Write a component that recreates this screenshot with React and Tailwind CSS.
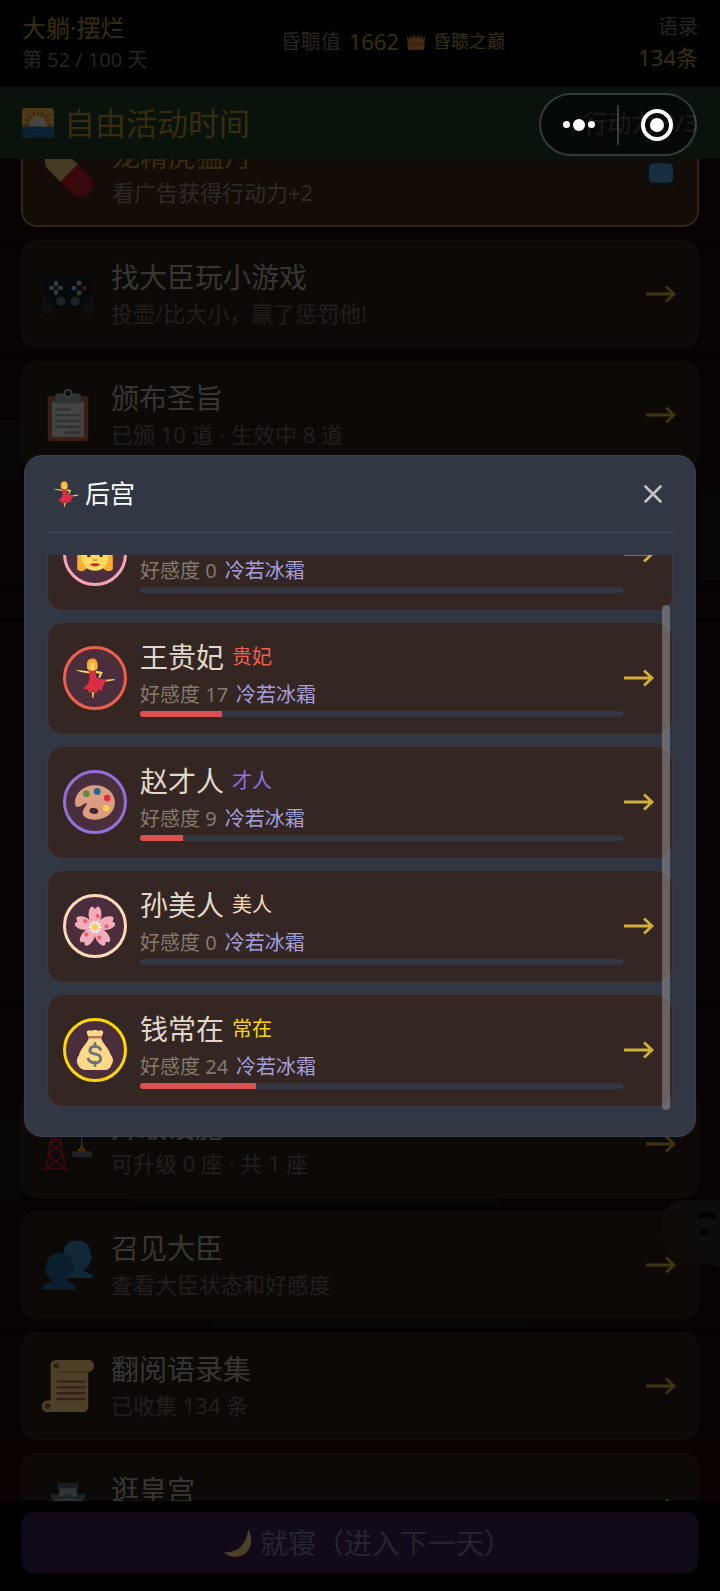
import clsx from "clsx";

const STATUS = { title: "大躺·摆烂", day: "第 52 / 100 天", label: "昏聩值", value: 1662, rank: "昏聩之巅", quotes: "134条" };

const ACTIONS_TOP = [
  { id: "ad", icon: PillIcon, title: "龙精虎猛丹", desc: "看广告获得行动力+2", ad: true },
  { id: "game", icon: GamepadIcon, title: "找大臣玩小游戏", desc: "投壶/比大小，赢了惩罚他!" },
  { id: "edict", icon: ClipboardIcon, title: "颁布圣旨", desc: "已颁 10 道 · 生效中 8 道" },
];

const ACTIONS_BOTTOM = [
  { id: "build", icon: CraneIcon, title: "升级设施", desc: "可升级 0 座 · 共 1 座" },
  { id: "minister", icon: PeopleIcon, title: "召见大臣", desc: "查看大臣状态和好感度" },
  { id: "quotes", icon: ScrollIcon, title: "翻阅语录集", desc: "已收集 134 条" },
  { id: "palace", icon: CastleIcon, title: "逛皇宫", desc: "" },
];

const CONSORTS = [
  { id: 1, icon: WomanIcon, name: "", rank: "", love: 0, ring: "border-[#f8a5b8]", color: "text-[#f8a5b8]" },
  { id: 2, icon: DancerIcon, name: "王贵妃", rank: "贵妃", love: 17, ring: "border-[#f0604c]", color: "text-[#f0604c]" },
  { id: 3, icon: PaletteIcon, name: "赵才人", rank: "才人", love: 9, ring: "border-[#9370db]", color: "text-[#9370db]" },
  { id: 4, icon: BlossomIcon, name: "孙美人", rank: "美人", love: 0, ring: "border-[#ffdab9]", color: "text-[#ffdab9]" },
  { id: 5, icon: MoneyIcon, name: "钱常在", rank: "常在", love: 24, ring: "border-[#ffd700]", color: "text-[#ffd700]" },
];

function DancerIcon({ className }) {
  return (
    <svg viewBox="0 0 36 36" className={className} aria-hidden="true">
      <path d="M0 10.600l13.500 1.600v1.800L5 12.600z" fill="#ffdc5d" />
      <path d="M19 11.500l6 1.200-2.500 5.300-1.500-.5 1.500-3.300-4-.8z" fill="#ffdc5d" />
      <path d="M27 19.500l9-.6-1 1.200-8 1.200z" fill="#ffdc5d" />
      <path d="M15.200 30.500h1.800l-.4 5.500h-.9z" fill="#ffdc5d" />
      <path d="M11 3.500C12 .5 17-.5 18.800 1.700c1.900 1.600 1.200 3.700 1.700 5.500.4 2.300-1.600 4.800-4.500 4.800-3.200 0-5.900-2.200-5.200-4.800.3-1.200-.3-2.200.2-3.700z" fill="#ffac33" />
      <path d="M13.500 4.500c1.300 1 2.500-.5 3.700-.2l.3 7.400h-3z" fill="#ffdc5d" />
      <path d="M12.500 10.800c1.500 1 4.500.8 5.700-.2l.9 7c2.800 1.500 5.500 1.700 9.800 1.600-.4 1.600-1.300 2.500-2.800 3 .8 1.700.2 2.800-1.200 3.200.3 1.900-.4 3.300-1.200 4.200-.9-.5-1.600-.9-2.300-1.700-.4 1.600-1.400 3-2.700 3.700-1.200-.4-1.900-1.200-2.400-2.200-1.300 1.400-2.700 1.900-4.200 1.700-.3-1-.2-2 .1-3-1.600.3-3.400 0-4.800-.9 3.200-2 5-4.500 5.900-8.200z" fill="#dd2e44" />
    </svg>
  );
}

function WomanIcon({ className }) {
  return (
    <svg viewBox="0 0 36 36" className={className} aria-hidden="true">
      <path d="M18 0C8 0 2 6 2 15v17c3 2 6 2 8-1h16c2 3 5 3 8 1V15C34 6 28 0 18 0z" fill="#ffac33" />
      <path d="M6 16c5-1 9-4 11-8 3 4 8 7 13 8v4c0 8-5 13-12 13S6 28 6 20z" fill="#ffdc5d" />
      <rect x="11" y="16" width="3" height="5" rx="1.500" fill="#662113" />
      <rect x="22" y="16" width="3" height="5" rx="1.500" fill="#662113" />
      <path d="M15.500 23h5c0 1.500-5 1.500-5 0z" fill="#c1694f" />
      <path d="M13.500 27c2.500-1 6.500-1 9 0-1.500 3-7.500 3-9 0z" fill="#df1f32" />
    </svg>
  );
}

function PaletteIcon({ className }) {
  return (
    <svg viewBox="0 0 36 36" className={className} aria-hidden="true">
      <path d="M18 3C8 3 0 10 0 18.500c0 2.500.6 4 2.500 4 3 0 5-3.500 8.500-3.500-1.500 3.500-4 5.500-4 9 0 4 5.500 6 11 6 10 0 18-7 18-15.500S28 3 18 3z" fill="#d99e82" />
      <ellipse cx="17" cy="26" rx="4" ry="2.700" fill="#42252b" transform="rotate(12 17 26)" />
      <circle cx="10.200" cy="10.500" r="3" fill="#5c913b" />
      <circle cx="20" cy="8.500" r="3" fill="#226699" />
      <circle cx="29" cy="14.500" r="3" fill="#dd2e44" />
      <circle cx="28" cy="23.500" r="3" fill="#ffcc4d" />
    </svg>
  );
}

function BlossomIcon({ className }) {
  return (
    <svg viewBox="0 0 36 36" className={className} aria-hidden="true">
      {[0, 72, 144, 216, 288].map((r) => (
        <g key={r} transform={`rotate(${r} 18 19)`}>
          <path d="M18 19C13 15 11 8 13 3c.5-1.500 1.500-2.500 2.700-2.500L18 2.500l2.300-2c1.200 0 2.200 1 2.700 2.500C25 8 23 15 18 19z" fill="#f4abba" />
          <circle cx="20.500" cy="9" r="1.800" fill="#ea596e" />
        </g>
      ))}
      {[20, 56, 92, 128, 164, 200, 236, 272, 308, 344].map((r) => (
        <path key={r} d="M17.300 19l-.2-5.500h1.800l-.2 5.500z" fill="#fff" transform={`rotate(${r} 18 19)`} />
      ))}
      <circle cx="18" cy="19" r="3" fill="#ffcc4d" />
    </svg>
  );
}

function MoneyIcon({ className }) {
  return (
    <svg viewBox="0 0 36 36" className={className} aria-hidden="true">
      <path d="M12.500 7h11c1 5 7 9 8.500 15 2.500 3 3 6 1 9-1 3-3 5-6 5H9c-3 0-5-2-6-4-2-3-1.500-7 .500-9C5 16 11.500 12 12.500 7z" fill="#fdd888" />
      <path d="M11 1c1-1.300 3-1 3.800 0 1-1.200 5-1.400 6.200 0 .8-1 3-1.200 4 0 1 1.700-.5 3.500-1 5H12c-.5-1.500-2-3.300-1-5z" fill="#fdd888" />
      <path d="M12 5.500h12v2H12z" fill="#bf6952" />
      <path d="M23 17.500c-1-2-3-2.800-5-2.800-5 0-6.500 5-1.500 6.500l3 .8c5.500 1.500 4.500 7.500-1.500 7.500-3 0-5-1-6-3.300M18 12v3M18 29v3" fill="none" stroke="#67757f" strokeWidth="2.600" strokeLinecap="round" />
    </svg>
  );
}

function PillIcon({ className }) {
  return (
    <svg viewBox="0 0 36 36" className={className} aria-hidden="true">
      <g transform="rotate(45 18 18)">
        <path d="M18 9.500h11.500a8.500 8.500 0 010 17H18z" fill="#be1931" />
        <path d="M18 9.500H6.500a8.500 8.500 0 000 17H18z" fill="#e8c56f" />
      </g>
    </svg>
  );
}

function GamepadIcon({ className }) {
  return (
    <svg viewBox="0 0 36 36" className={className} aria-hidden="true">
      <path d="M3 14C0 21 0 31 1 31.500c5 1 8-3 10-7.500h14c2 4.500 5 8.500 10 7.500 1-.5 1-10.500-2-17.500z" fill="#31373d" />
      <path d="M9 5.500h18c5 0 7.500 4 7.500 9.500S31 25 26 27.500c-2 1-4 0-6 0h-4c-2 0-4 1-6 0C5 25 1.500 20.500 1.500 15S4 5.500 9 5.500z" fill="#16202a" />
      <g fill="#b4c0c8">
        <rect x="8.400" y="9" width="2.600" height="3.600" rx=".6" />
        <rect x="8.400" y="15" width="2.600" height="3.600" rx=".6" />
        <rect x="5" y="12.500" width="3.600" height="2.600" rx=".6" />
        <rect x="10.800" y="12.500" width="3.600" height="2.600" rx=".6" />
      </g>
      <circle cx="13" cy="23" r="3.200" fill="#66757f" />
      <circle cx="23" cy="23" r="3.200" fill="#66757f" />
      <circle cx="25.700" cy="10.500" r="1.700" fill="#ffcc4d" />
      <circle cx="22.200" cy="14" r="1.700" fill="#88c9f9" />
      <circle cx="29.200" cy="14" r="1.700" fill="#dd2e44" />
      <circle cx="25.700" cy="17.300" r="1.700" fill="#a6d388" />
    </svg>
  );
}

function ClipboardIcon({ className }) {
  return (
    <svg viewBox="0 0 36 36" className={className} aria-hidden="true">
      <rect x="4" y="5" width="28" height="31" rx="2" fill="#c1694f" />
      <path d="M7 9h22v24H7z" fill="#e8e8e8" />
      <path d="M9 6c0-2 1-3 3-3h3a3 3 0 016 0h3c2 0 3 1 3 3v4H9z" fill="#99aab5" />
      <circle cx="18" cy="3" r="2.400" fill="#292f33" stroke="#ccd6dd" />
      <path d="M9 14.200h11M9 18.200h18M9 22.200h18M9 26.200h18M16 30.200h11" stroke="#99aab5" strokeWidth="1.800" />
    </svg>
  );
}

function CraneIcon({ className }) {
  return (
    <svg viewBox="0 0 36 36" className={className} aria-hidden="true">
      <path d="M3 35L7.500 8h4L16 35M.5 35h18M6 17l8 8M13 17l-8 8M4.500 26l10 8M15 26L4 34M7 10l5 7M12 10l-5 7" stroke="#be1931" strokeWidth="1.300" fill="none" />
      <path d="M4 5h29v3H4z" fill="#be1931" />
      <path d="M27.500 8v9" stroke="#99aab5" strokeWidth=".8" />
      <path d="M27.500 17v3l-2 2.500h4l-2-2.500" stroke="#ffac33" strokeWidth="1.200" fill="none" />
      <path d="M21 23h13.500v4H21z" fill="#66757f" />
    </svg>
  );
}

function PeopleIcon({ className }) {
  return (
    <svg viewBox="0 0 36 36" className={className} aria-hidden="true">
      <path d="M15 10C15 4 19 1 24.500 1c6 0 9 4 9 9l1.500 3-1.500.7c0 4-1.500 6.300-4.500 7.300v1.500c3 1 6.500 1.500 6.500 4.500H17z" fill="#3b88c3" />
      <path d="M3 19c0-6 4-9.500 9.500-9.500S22 13 22 18.500c.5 1.500.5 2.500-.5 3-.5 4-2 5.500-4 6.500v1.500c2.500 1.500 6 1.500 6 5.500H0c0-4 4-4 6.500-5.500V28c-2.500-1.500-3.500-3.500-4-6-1-1-.5-2 .5-3z" fill="#226699" />
    </svg>
  );
}

function ScrollIcon({ className }) {
  return (
    <svg viewBox="0 0 36 36" className={className} aria-hidden="true">
      <path d="M6 4c0-2.500 1.500-4 4-4h22c2.500 0 4 1.700 4 4s-1.500 4.200-4 4.200V32c0 2.500-1.500 4-4 4H4c-2.500 0-4-1.500-4-4s1.700-4 4-4h2z" fill="#ffd983" />
      <path d="M9 7.800h23v.9H9z" fill="#e39f3d" />
      <circle cx="10" cy="4" r="2" fill="#a0694f" />
      <circle cx="4" cy="32" r="2" fill="#a0694f" />
      <path d="M10 15h20M10 19h20M10 23h20M10 27h20" stroke="#c1694f" strokeWidth="1.600" />
    </svg>
  );
}

function CastleIcon({ className }) {
  return (
    <svg viewBox="0 0 36 36" className={className} aria-hidden="true">
      <path d="M11 0l1 1.500h12L25 0v6H11zM6 8l2 1h20l2-1v5H6z" fill="#4b6a80" />
      <path d="M12 5h12v6H12zM8 12h20v24H8z" fill="#99aab5" />
      <path d="M6 10l7 1 5-2 5 2 7-1-2 3h-5l-5-2-5 2H8z" fill="#66757f" />
    </svg>
  );
}

function SunriseIcon({ className }) {
  return (
    <svg viewBox="0 0 36 36" className={className} aria-hidden="true">
      <rect x="0" y="1" width="36" height="34" rx="4" fill="#ffc04d" />
      {[-90, -67, -45, -22, 0, 22, 45, 67, 90].map((r) => (
        <path key={r} d="M17.300 8.500l.7-5 .7 5z" stroke="#e07f1c" transform={`rotate(${r} 18 20)`} />
      ))}
      <circle cx="18" cy="20" r="9.500" fill="#f3e6d0" />
      <path d="M0 22h36v9a4 4 0 01-4 4H4a4 4 0 01-4-4z" fill="#226fb0" />
      <path d="M8 26q2.500-1.500 5 0t5 0 5 0 5 0M5 31q2.500-1.500 5 0t5 0 5 0 5 0 5 0" stroke="#4b97d0" fill="none" />
    </svg>
  );
}

function CrownIcon({ className }) {
  return (
    <svg viewBox="0 0 36 36" className={className} aria-hidden="true">
      <path d="M2 34L0 7l6 6 1-9 5 8 1-10 5 9 5-9 1 10 5-8 1 9 6-6-2 27z" fill="#e8943a" />
      <path d="M5 22h26" stroke="#7c533e" strokeWidth="3" strokeDasharray="3 3" />
    </svg>
  );
}

function TvIcon({ className }) {
  return (
    <svg viewBox="0 0 36 36" className={className} aria-hidden="true">
      <rect x="1" y="4" width="34" height="29" rx="4" fill="#292f33" />
      <rect x="4.500" y="7" width="27" height="22" rx="5" fill="#4a9bd8" />
      <path d="M3 33h3v2H3zM30 33h3v2h-3z" fill="#4a4a44" />
    </svg>
  );
}

function MoonIcon({ className }) {
  return (
    <svg viewBox="0 0 36 36" className={className} aria-hidden="true">
      <path d="M31 0c9 16 2 33-13 35.500C10 37 3 33.500 0 30c16 1 30-10 31-30z" fill="#ffd983" />
    </svg>
  );
}

function Arrow() {
  return (
    <svg viewBox="0 0 32 20" className="h-5 w-8 shrink-0" aria-hidden="true">
      <path d="M0 10h28M20 2.500l8 7.500-8 7.500" fill="none" stroke="#d4af37" strokeWidth="2.800" />
    </svg>
  );
}

function ActionCard({ icon: Icon, title, desc, ad }) {
  return (
    <button
      className={clsx(
        "flex h-[108px] w-full shrink-0 items-center gap-[17px] rounded-2xl px-5 text-left",
        ad ? "border-2 border-[#a8862c] bg-[#43281a]" : "border border-[#352b25] bg-[#2e241c]/90"
      )}
    >
      <Icon className="h-[52px] w-[52px] shrink-0" />
      <div className="min-w-0 flex-1">
        <p className={clsx("h-[38px] text-[28px] leading-[38px]", ad ? "text-[#b8962f]" : "text-[#bdb2a8]")}>{title}</p>
        <p className={clsx("h-[34px] text-[22px] leading-[34px]", ad ? "text-[#988f85]" : "text-[#6e665f]")}>{desc}</p>
      </div>
      {ad ? <TvIcon className="h-8 w-8 shrink-0" /> : <Arrow />}
    </button>
  );
}

function ConsortRow({ icon: Icon, name, rank, love, ring, color }) {
  return (
    <button className="flex h-[113px] w-full items-center gap-[13px] rounded-2xl border border-[#3d383d] bg-[#332623] px-4 text-left">
      <span className={clsx("-ml-px flex h-16 w-16 shrink-0 items-center justify-center rounded-full border-[3px] bg-[#4b2e3c]", ring)}>
        <Icon className="h-10 w-10" />
      </span>
      <div className="min-w-0 flex-1">
        <div className="flex h-9 items-center gap-2">
          <span className="text-[28px] leading-9 text-[#e2d8ca]">{name}</span>
          <span className={clsx("text-[20px]", color)}>{rank}</span>
        </div>
        <div className="mt-1 flex h-8 items-center gap-2 text-[20px]">
          <span className="text-[#857a6c]">好感度 {love}</span>
          <span className="text-[#a3a0dc]">冷若冰霜</span>
        </div>
        <div className="h-1.5 overflow-hidden rounded-full bg-[#343744]">
          <div className="h-full bg-[#dc5050]" style={{ width: `${love}%` }} />
        </div>
      </div>
      <span className="-ml-3">
        <Arrow />
      </span>
    </button>
  );
}

function Backdrop() {
  return (
    <svg viewBox="0 0 720 1591" preserveAspectRatio="none" className="absolute inset-0 h-full w-full" aria-hidden="true">
      <path d="M0 0h720v1591H0z" fill="#140d08" />
      <path d="M0 420h22v60H0zM700 490h20v90h-20zM0 1120h22v80H0zM130 1198h370v10H130zM210 1318h320v12H210z" fill="#19170f" />
      <path d="M0 246h720M0 336h720M0 353h720M0 590h720M0 620h720M0 1006h720M0 1208h720M0 1330h720" stroke="#070403" strokeWidth="3" />
      <path d="M0 1441h720v60H0z" fill="#240a05" />
      <path d="M720 1200h-40q-20 5-18 30t20 32l38 4z" fill="#2c2a25" />
      <path d="M698 1217q8-5 18 0M700 1232h8" stroke="#080504" strokeWidth="5" />
    </svg>
  );
}

export default function App() {
  return (
    <div className="relative flex h-screen flex-col overflow-hidden bg-black font-['Noto_Sans','Noto_Sans_CJK_SC',sans-serif]">
      <Backdrop />

      <header className="relative flex h-[87px] shrink-0 items-center justify-between bg-[#080604] px-[22px]">
        <div>
          <h1 className="text-[24px] leading-8 text-[#b8962f]">{STATUS.title}</h1>
          <p className="text-[20px] leading-8 text-[#7f776e]">{STATUS.day}</p>
        </div>
        <div className="flex items-center gap-2 pb-1">
          <span className="text-[20px] text-[#7f776e]">{STATUS.label}</span>
          <span className="text-[22px] text-[#b8962f]">{STATUS.value}</span>
          <CrownIcon className="h-[18px] w-[18px]" />
          <span className="text-[18px] text-[#b8962f]">{STATUS.rank}</span>
        </div>
        <div className="pb-1 text-right">
          <p className="text-[20px] leading-[30px] text-[#7f776e]">语录</p>
          <p className="text-[22px] leading-[30px] text-[#b8962f]">{STATUS.quotes}</p>
        </div>
      </header>

      <div className="relative z-10 flex h-[72px] shrink-0 items-center bg-[#233d2a] px-[22px]">
        <SunriseIcon className="h-8 w-8" />
        <h2 className="ml-2.5 flex-1 text-[31px] text-[#b8962f]">自由活动时间</h2>
        <span className="text-[24px] text-[#c0b8b0]">行动力 3/3</span>
      </div>

      <main className="relative min-h-0 flex-1 overflow-hidden px-[21px]">
        <div className="-mt-10 flex flex-col gap-[13px]">
          {ACTIONS_TOP.map((a) => (
            <ActionCard key={a.id} {...a} />
          ))}
          <div className="h-[595px] shrink-0" />
          {ACTIONS_BOTTOM.map((a) => (
            <ActionCard key={a.id} {...a} />
          ))}
        </div>
      </main>

      <footer className="relative shrink-0 bg-[#080504] px-[22px] pt-[11px] pb-[18px]">
        <button className="flex h-[61px] w-full items-center justify-center gap-2 rounded-xl bg-[#3c2454] pl-4 text-[28px] text-[#8476a0]">
          <MoonIcon className="h-7 w-7" />
          就寝（进入下一天）
        </button>
      </footer>

      {/* modal */}
      <div className="fixed inset-0 z-20 flex items-center justify-center bg-black/70 px-6">
        <section role="dialog" aria-label="后宫" className="w-full rounded-[18px] border border-[#3c4152] bg-[#323744] px-[22px] pb-[26px]">
          <div className="flex h-[77px] items-center border-b border-[#454655] px-1.5">
            <DancerIcon className="h-[26px] w-[26px]" />
            <h3 className="ml-1.5 flex-1 text-[25px] text-white">后宫</h3>
            <button aria-label="关闭" className="flex h-7 w-7 items-center justify-center">
              <svg viewBox="0 0 18 18" className="h-[18px] w-[18px]" aria-hidden="true">
                <path d="M1.500 1.500l15 15M16.500 1.500l-15 15" stroke="#c4c4c8" strokeWidth="2.600" strokeLinecap="round" />
              </svg>
            </button>
          </div>
          <div className="relative mt-[22px] h-[555px] overflow-hidden">
            <div className="-mt-[57px] flex flex-col gap-[11px]">
              {CONSORTS.map((c) => (
                <ConsortRow key={c.id} {...c} />
              ))}
            </div>
            <div className="absolute right-[3px] bottom-0 h-[505px] w-2 rounded-full bg-[#8c8c8c]/60" />
          </div>
        </section>
      </div>

      {/* mini program capsule */}
      <div className="absolute top-[93px] right-[23px] z-30 flex h-[63px] w-[158px] items-center rounded-full border-2 border-white/20 bg-black/50">
        <button aria-label="更多" className="flex h-full flex-1 items-center justify-center gap-[3px]">
          <span className="h-[7px] w-[7px] rounded-full bg-white" />
          <span className="h-3 w-3 rounded-full bg-white" />
          <span className="h-[7px] w-[7px] rounded-full bg-white" />
        </button>
        <span className="h-10 w-0.5 bg-white/20" />
        <button aria-label="退出" className="flex h-full flex-1 items-center justify-center">
          <span className="flex h-8 w-8 items-center justify-center rounded-full border-4 border-white">
            <span className="h-3.5 w-3.5 rounded-full bg-white" />
          </span>
        </button>
      </div>
    </div>
  );
}
